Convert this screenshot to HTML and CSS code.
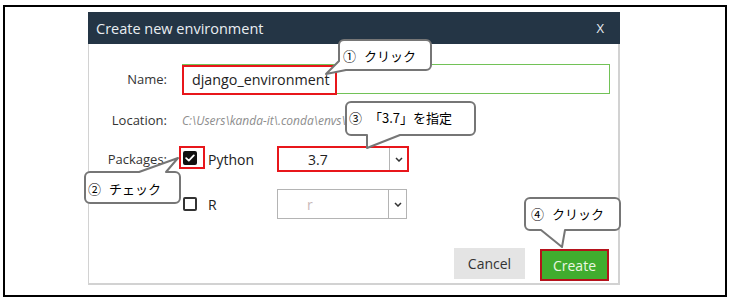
FILE: index.html
```html
<!DOCTYPE html>
<html lang="ja">
<head>
<meta charset="utf-8">
<title>Create new environment</title>
<link rel="stylesheet" href="styles.css">
</head>
<body>
<div class="frame">
  <div class="dialog">
    <div class="titlebar"><span>Create new environment</span><span class="close">X</span></div>
    <div class="body">
      <div class="row row-name">
        <span class="lbl">Name:</span>
        <div class="input"><span class="hl-text">django_environment</span></div>
      </div>
      <div class="row row-loc">
        <span class="lbl">Location:</span>
        <span class="path">C:\Users\kanda-it\.conda\envs\django_environment</span>
      </div>
      <div class="row row-pkg">
        <span class="lbl">Packages:</span>
        <div class="pkg">
          <span class="cbcell hl"><span class="cb checked"><svg width="10" height="8" viewBox="0 0 10 8"><polyline points="1.2,4.2 3.8,6.6 8.8,1.4" fill="none" stroke="#fff" stroke-width="1.8" stroke-linecap="round" stroke-linejoin="round"/></svg></span></span>
          <span class="pkgname">Python</span>
          <div class="select sel-hl"><span class="val">3.7</span><span class="arrow"><svg width="8" height="5" viewBox="0 0 8 5"><polyline points="1,1 4,4 7,1" fill="none" stroke="#333" stroke-width="1.5"/></svg></span></div>
        </div>
      </div>
      <div class="row row-r">
        <span class="lbl"></span>
        <div class="pkg">
          <span class="cbcell"><span class="cb"></span></span>
          <span class="pkgname">R</span>
          <div class="select sel-plain"><span class="val val-dim">r</span><span class="arrow"><svg width="8" height="5" viewBox="0 0 8 5"><polyline points="1,1 4,4 7,1" fill="none" stroke="#333" stroke-width="1.5"/></svg></span></div>
        </div>
      </div>
      <div class="buttons">
        <button class="btn cancel">Cancel</button>
        <button class="btn create">Create</button>
      </div>
    </div>
  </div>
</div>

<svg class="callouts" width="732" height="303" viewBox="0 0 732 303">
  <g fill="#fff" stroke="#767676" stroke-width="2" stroke-linejoin="round">
    <path d="M344,40 H426 A5,5 0 0 1 431,45 V65 A5,5 0 0 1 426,70 H346 L326,74 L339,61 V45 A5,5 0 0 1 344,40 Z"/>
    <path d="M351,102 H470 A5,5 0 0 1 475,107 V130 A5,5 0 0 1 470,135 H400 L367,148 V135 H351 A5,5 0 0 1 346,130 V107 A5,5 0 0 1 351,102 Z"/>
    <path d="M90,172 H139 L178,158 L166,172 H175 A5,5 0 0 1 180,177 V198 A5,5 0 0 1 175,203 H90 A5,5 0 0 1 85,198 V177 A5,5 0 0 1 90,172 Z"/>
    <path d="M530,198 H615 A5,5 0 0 1 620,203 V225 A5,5 0 0 1 615,230 H565 L562,247 L541,230 H530 A5,5 0 0 1 525,225 V203 A5,5 0 0 1 530,198 Z"/>
  </g>
</svg>
<div class="note n1"><span class="num">①</span>クリック</div>
<div class="note n3"><span class="num">③</span>「3.7」を指定</div>
<div class="note n2"><span class="num">②</span>チェック</div>
<div class="note n4"><span class="num">④</span>クリック</div>
</body>
</html>
```

FILE: styles.css
```css
body {
  margin: 0;
  background: #fff;
  font-family: "Open Sans", "DejaVu Sans", sans-serif;
}

.frame {
  box-sizing: border-box;
  width: 724px;
  height: 292px;
  margin: 5px 0 0 3px;
  border: 2px solid #000;
  padding: 5px 0 0 83px;
}

.dialog {
  box-sizing: border-box;
  width: 532px;
  height: 273px;
  display: flex;
  flex-direction: column;
}

.titlebar {
  box-sizing: border-box;
  height: 32px;
  background: #243545;
  color: #e9eef2;
  display: flex;
  align-items: center;
  justify-content: space-between;
  padding: 0 16px 0 8px;
  font-size: 14.5px;
}

.close {
  font-size: 13px;
}

.body {
  flex: 1;
  border-left: 1px solid #d2d2d2;
  border-right: 2px solid #d2d2d2;
  border-bottom: 2px solid #d2d2d2;
  padding-top: 20px;
}

.row {
  display: grid;
  grid-template-columns: 78px 428px;
  column-gap: 15px;
  align-items: center;
}

.lbl {
  text-align: right;
  font-size: 13px;
  color: #333;
}

.row-name { height: 30px; }
.row-loc { height: 52px; }
.row-pkg { height: 26px; }
.row-r { height: 30px; margin-top: 17px; }

.input {
  box-sizing: border-box;
  height: 30px;
  border: 1px solid #72c257;
  display: flex;
}

.hl-text {
  box-sizing: border-box;
  height: 30px;
  margin: 0 0 0 -1px;
  border: 2px solid #e8161b;
  padding: 0 5px 0 8px;
  line-height: 25px;
  font-size: 14.3px;
  color: #222;
}

.path {
  max-width: 163px;
  font-size: 12px;
  font-style: italic;
  color: #8d8d8d;
  white-space: nowrap;
  overflow: hidden;
}

.pkg {
  display: flex;
  align-items: center;
  height: 100%;
}

.cbcell {
  box-sizing: border-box;
  width: 26px;
  height: 23px;
  margin-left: -3px;
  border: 2px solid transparent;
  padding-left: 2px;
  display: flex;
  align-items: center;
}

.row-pkg .cbcell { align-self: flex-start; }

.cbcell.hl { border-color: #e8161b; }

.cb {
  box-sizing: border-box;
  width: 14px;
  height: 14px;
  border: 2px solid #333;
  border-radius: 2px;
  background: #fff;
  display: flex;
  align-items: center;
  justify-content: center;
}

.cb.checked {
  background: #111;
  border-color: #111;
}

.pkgname {
  box-sizing: border-box;
  width: 72px;
  padding-left: 3px;
  font-size: 14px;
  color: #222;
}

.select {
  box-sizing: border-box;
  display: flex;
  background: #fff;
}

.sel-hl {
  width: 132px;
  height: 26px;
  border: 2px solid #e8161b;
}

.sel-plain {
  width: 130px;
  height: 30px;
  border: 1px solid #b4b4b4;
}

.val {
  flex: 1;
  display: flex;
  align-items: center;
  padding-left: 29px;
  font-size: 14px;
  color: #222;
}

.val-dim { color: #c9b9b9; }

.arrow {
  width: 17px;
  border-left: 1px solid #b4b4b4;
  display: flex;
  align-items: center;
  justify-content: center;
}

.buttons {
  display: flex;
  justify-content: flex-end;
  align-items: flex-start;
  gap: 15px;
  padding-right: 9px;
  margin-top: 29px;
}

.btn {
  box-sizing: border-box;
  font-family: "Open Sans", "DejaVu Sans", sans-serif;
  font-size: 14px;
  padding: 0;
  cursor: pointer;
}

.cancel {
  width: 71px;
  height: 31px;
  border: none;
  background: #e4e4e4;
  color: #333;
}

.create {
  width: 69px;
  height: 32px;
  margin-top: 1px;
  border: 2px solid #b5121b;
  background: #40ad2e;
  color: #eaf7e3;
}

.callouts {
  position: absolute;
  left: 0;
  top: 0;
  pointer-events: none;
}

.note {
  position: absolute;
  font-family: "Noto Sans CJK JP", sans-serif;
  font-size: 13px;
  line-height: 13px;
  color: #000;
  white-space: nowrap;
}

.num { margin-right: 8px; }

.n1 { left: 343px; top: 49px; }
.n3 { left: 349px; top: 111px; }
.n3 .num { margin-right: 7px; }
.n2 { left: 88px; top: 182px; }
.n4 { left: 531px; top: 207px; }
```
